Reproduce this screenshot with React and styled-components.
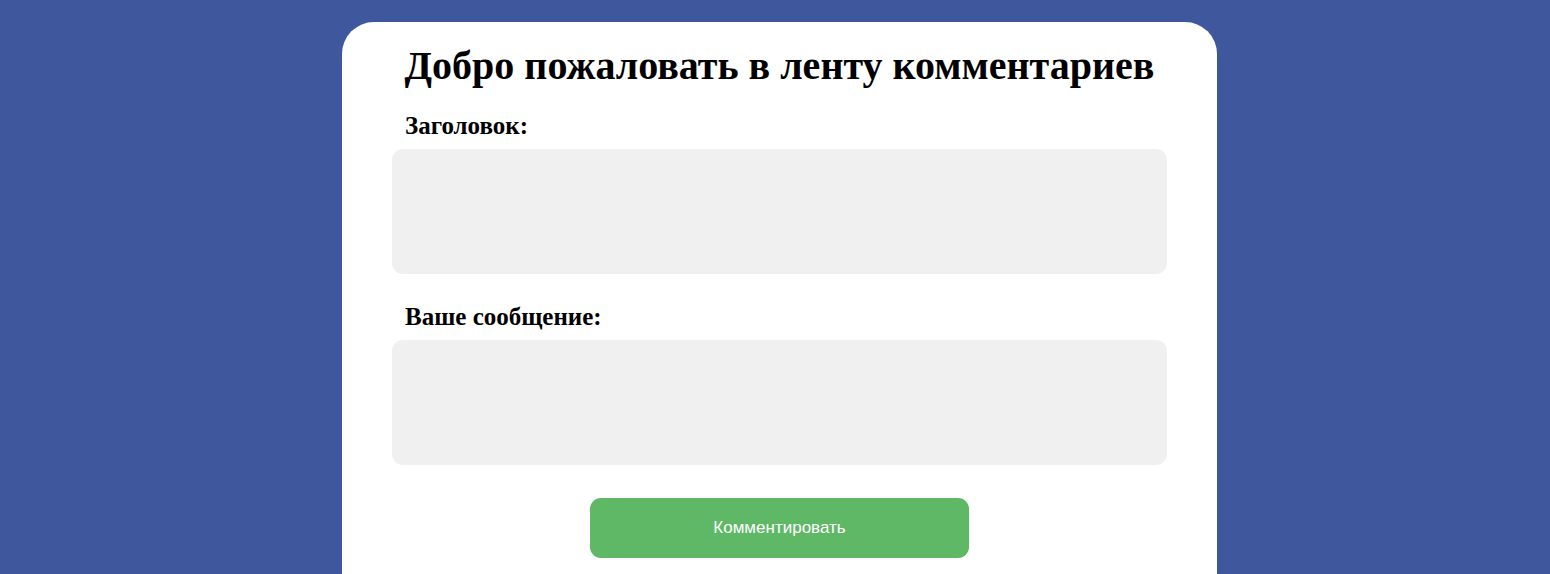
import React from "react";
import styled, { createGlobalStyle } from "styled-components";

const Global = createGlobalStyle`
  html, body { margin: 0; padding: 0; background: #3f579d; }
  body { font-family: "Liberation Serif", "Times New Roman", serif; overflow: hidden; }
`;

const Page = styled.div`
  display: flex;
  justify-content: center;
  padding: 22px 0 0 9px;
  min-height: 574px;
  box-sizing: border-box;
`;

const Card = styled.form`
  width: 875px;
  min-height: 600px;
  background: #fff;
  border-radius: 32px;
  padding: 18px 50px 0;
  box-sizing: border-box;
  display: flex;
  flex-direction: column;
`;

const Title = styled.h1`
  margin: 0;
  font-size: 40px;
  font-weight: bold;
  text-align: center;
  color: #000;
  line-height: 52px;
`;

const Label = styled.label`
  display: block;
  font-size: 25px;
  font-weight: bold;
  color: #000;
  margin: ${(p) => p.$top}px 0 9px 13px;
  line-height: 28px;
`;

const Field = styled.textarea`
  display: block;
  width: 100%;
  height: 125px;
  box-sizing: border-box;
  border: none;
  outline: none;
  resize: none;
  background: #f0f0f0;
  border-radius: 11px;
  padding: 10px;
  font-family: "Liberation Sans", Arial, sans-serif;
  font-size: 16px;
`;

const Actions = styled.div`
  display: flex;
  justify-content: center;
  margin-top: 33px;
`;

const Button = styled.button`
  width: 379px;
  height: 60px;
  border: none;
  border-radius: 11px;
  background: #5eb865;
  color: #fff;
  font-family: "Liberation Sans", Arial, sans-serif;
  font-size: 17px;
  cursor: pointer;
`;

export default function App() {
  return (
    <>
      <Global />
      <Page>
        <Card onSubmit={(e) => e.preventDefault()}>
          <Title>Добро пожаловать в ленту комментариев</Title>
          <Label $top={20} htmlFor="title">Заголовок:</Label>
          <Field id="title" />
          <Label $top={29} htmlFor="msg">Ваше сообщение:</Label>
          <Field id="msg" />
          <Actions>
            <Button type="submit">Комментировать</Button>
          </Actions>
        </Card>
      </Page>
    </>
  );
}
